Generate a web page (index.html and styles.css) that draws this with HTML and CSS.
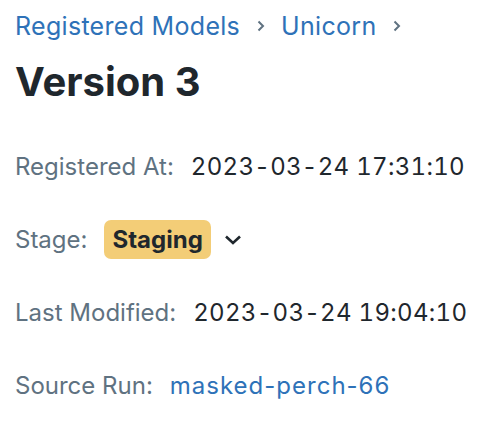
FILE: index.html
```html
<!DOCTYPE html>
<html>
    <head>
        <title>Version 3 - Unicorn</title>
        <link rel="stylesheet" href="styles.css">
    </head>
    <body>
        <nav class="breadcrumbs">
            <a href="#">Registered Models</a>
            <span class="crumb-sep">
                <svg width="10" height="12" viewBox="0 0 10 12"><path d="M2.5 1.5 L7 6 L2.5 10.5" fill="none" stroke="currentColor" stroke-width="2"/></svg>
            </span>
            <a href="#">Unicorn</a>
            <span class="crumb-sep">
                <svg width="10" height="12" viewBox="0 0 10 12"><path d="M2.5 1.5 L7 6 L2.5 10.5" fill="none" stroke="currentColor" stroke-width="2"/></svg>
            </span>
        </nav>
        <h1 class="title">Version 3</h1>

        <div class="meta">
            <div class="meta-row">
                <span class="meta-label">Registered At:</span>
                <span class="meta-value">2023-03-24 17:31:10</span>
            </div>
            <div class="meta-row">
                <span class="meta-label">Stage:</span>
                <span class="stage">
                    <span class="badge">Staging</span>
                    <svg class="caret" width="18" height="10" viewBox="0 0 18 10"><path d="M2 1.5 L9 8 L16 1.5" fill="none" stroke="currentColor" stroke-width="2.6"/></svg>
                </span>
            </div>
            <div class="meta-row">
                <span class="meta-label">Last Modified:</span>
                <span class="meta-value">2023-03-24 19:04:10</span>
            </div>
            <div class="meta-row">
                <span class="meta-label">Source Run:</span>
                <a class="meta-link" href="#">masked-perch-66</a>
            </div>
        </div>
    </body>
</html>
```

FILE: styles.css
```css
html, body {
    margin: 0;
    padding: 0;
}
body {
    background: #FFF;
    font-family: Inter, "Noto Sans", sans-serif;
    color: #1f272d;
    padding: 10px 15px 0 15px;
}
a {
    color: #2e72b8;
    text-decoration: none;
}
.breadcrumbs {
    display: flex;
    align-items: center;
    font-size: 25px;
    letter-spacing: 0.3px;
    line-height: 32px;
}
.crumb-sep {
    display: flex;
    align-items: center;
    color: #5f7281;
    margin: 0 15px 0 16px;
}
.title {
    font-size: 40px;
    line-height: 48px;
    font-weight: 700;
    margin: 16px 0 24px 0;
}
.meta-row {
    display: flex;
    align-items: center;
    height: 73px;
    font-size: 24px;
}
.meta-label {
    color: #5f7281;
    margin-right: 17px;
}
.meta-value {
    color: #1f272d;
    font-feature-settings: "tnum";
    letter-spacing: 0.3px;
}
.meta-link {
    letter-spacing: 1px;
}
.stage {
    display: flex;
    align-items: center;
}
.badge {
    background: #f3cd77;
    border-radius: 7px;
    font-weight: 700;
    padding: 0 8px;
    line-height: 39px;
}
.caret {
    margin-left: 13px;
    color: #1f272d;
}
```
